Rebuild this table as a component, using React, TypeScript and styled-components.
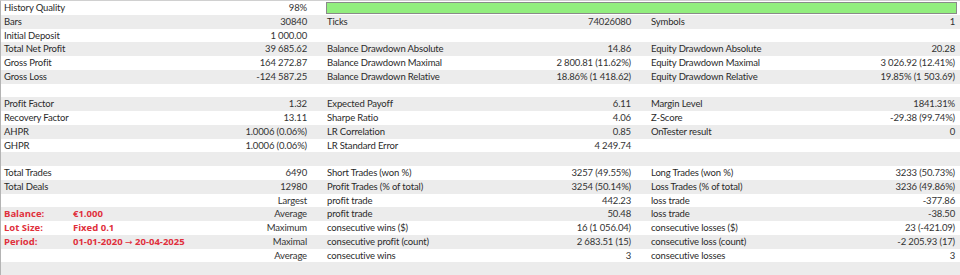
import React from 'react'
import styled, { createGlobalStyle } from 'styled-components'

const GlobalStyle = createGlobalStyle`
  html, body { margin: 0; padding: 0; background: #fff; }
  body { font-family: Lato, "Open Sans", sans-serif; }
`

type Cell = [string, string]
type Note = [string, string]
type RowData = { cells?: Cell[]; note?: Note; bar?: boolean }

const rows: RowData[] = [
  { cells: [['History Quality', '98%']], bar: true },
  { cells: [['Bars', '30840'], ['Ticks', '74026080'], ['Symbols', '1']] },
  { cells: [['Initial Deposit', '1 000.00'], ['', ''], ['', '']] },
  { cells: [['Total Net Profit', '39 685.62'], ['Balance Drawdown Absolute', '14.86'], ['Equity Drawdown Absolute', '20.28']] },
  { cells: [['Gross Profit', '164 272.87'], ['Balance Drawdown Maximal', '2 800.81 (11.62%)'], ['Equity Drawdown Maximal', '3 026.92 (12.41%)']] },
  { cells: [['Gross Loss', '-124 587.25'], ['Balance Drawdown Relative', '18.86% (1 418.62)'], ['Equity Drawdown Relative', '19.85% (1 503.69)']] },
  {},
  { cells: [['Profit Factor', '1.32'], ['Expected Payoff', '6.11'], ['Margin Level', '1841.31%']] },
  { cells: [['Recovery Factor', '13.11'], ['Sharpe Ratio', '4.06'], ['Z-Score', '-29.38 (99.74%)']] },
  { cells: [['AHPR', '1.0006 (0.06%)'], ['LR Correlation', '0.85'], ['OnTester result', '0']] },
  { cells: [['GHPR', '1.0006 (0.06%)'], ['LR Standard Error', '4 249.74'], ['', '']] },
  {},
  { cells: [['Total Trades', '6490'], ['Short Trades (won %)', '3257 (49.55%)'], ['Long Trades (won %)', '3233 (50.73%)']] },
  { cells: [['Total Deals', '12980'], ['Profit Trades (% of total)', '3254 (50.14%)'], ['Loss Trades (% of total)', '3236 (49.86%)']] },
  { cells: [['', 'Largest'], ['profit trade', '442.23'], ['loss trade', '-377.86']] },
  { cells: [['', 'Average'], ['profit trade', '50.48'], ['loss trade', '-38.50']], note: ['Balance:', '€1.000'] },
  { cells: [['', 'Maximum'], ['consecutive wins ($)', '16 (1 056.04)'], ['consecutive losses ($)', '23 (-421.09)']], note: ['Lot Size:', 'Fixed 0.1'] },
  { cells: [['', 'Maximal'], ['consecutive profit (count)', '2 683.51 (15)'], ['consecutive loss (count)', '-2 205.93 (17)']], note: ['Period:', '01-01-2020 → 20-04-2025'] },
  { cells: [['', 'Average'], ['consecutive wins', '3'], ['consecutive losses', '3']] },
  {},
]

// the arrow glyph is missing from Open Sans, so give it a font that has it
const renderNote = (text: string) =>
  text.split('→').flatMap((part, k) =>
    k === 0 ? [part] : [<Arrow key={k}>→</Arrow>, part]
  )

const App = () => {
  return (
    <>
      <GlobalStyle />
      <Report>
        {rows.map((row, i) => (
          <Row key={i} $shaded={i % 2 === 1}>
            {(row.cells || []).map(([label, value], j) => (
              <Group key={j} $last={j === 2}>
                {j === 0 && row.note ? (
                  <Note>
                    <NoteKey>{row.note[0]}</NoteKey>
                    <span>{renderNote(row.note[1])}</span>
                  </Note>
                ) : (
                  <Label>{label}</Label>
                )}
                <Value>{value}</Value>
              </Group>
            ))}
            {row.bar && (
              <QualityBar>
                <Fill />
              </QualityBar>
            )}
          </Row>
        ))}
      </Report>
    </>
  )
}

export default App

const Report = styled.div`
  width: 960px;
  height: 275px;
  overflow: hidden;
  box-sizing: border-box;
  border-left: 1px solid #b4b4b4;
  border-top: 1px solid #d0d0d0;
`

const Row = styled.div<{ $shaded: boolean }>`
  display: grid;
  grid-template-columns: 323px 324px 312px;
  height: 13.75px;
  align-items: center;
  background-color: ${p => (p.$shaded ? '#ececec' : '#ffffff')};
  font-size: 9.5px;
  letter-spacing: -0.15px;
  color: #2a2a2a;
`

const Group = styled.div<{ $last: boolean }>`
  display: flex;
  justify-content: space-between;
  align-items: center;
  padding: 0 ${p => (p.$last ? '5px' : '17px')} 0 3px;
  white-space: nowrap;
  line-height: 13.75px;
`

const Label = styled.span``

const Value = styled.span`
  color: #333;
`

const Note = styled.span`
  display: flex;
  color: #e0303c;
  font-weight: 700;
  font-family: "Open Sans", sans-serif;
  font-size: 9.5px;
  letter-spacing: 0;
`

const NoteKey = styled.span`
  width: 69px;
`

const Arrow = styled.span`
  font-family: "DejaVu Sans", sans-serif;
  font-weight: 400;
  font-size: 9px;
`

const QualityBar = styled.div`
  grid-column: 2 / 4;
  height: 10px;
  margin: 0 3px 0 2px;
  border: 1px solid #8a8a8a;
  display: flex;
`

const Fill = styled.div`
  flex: 1;
  background-color: #92ee7e;
`
